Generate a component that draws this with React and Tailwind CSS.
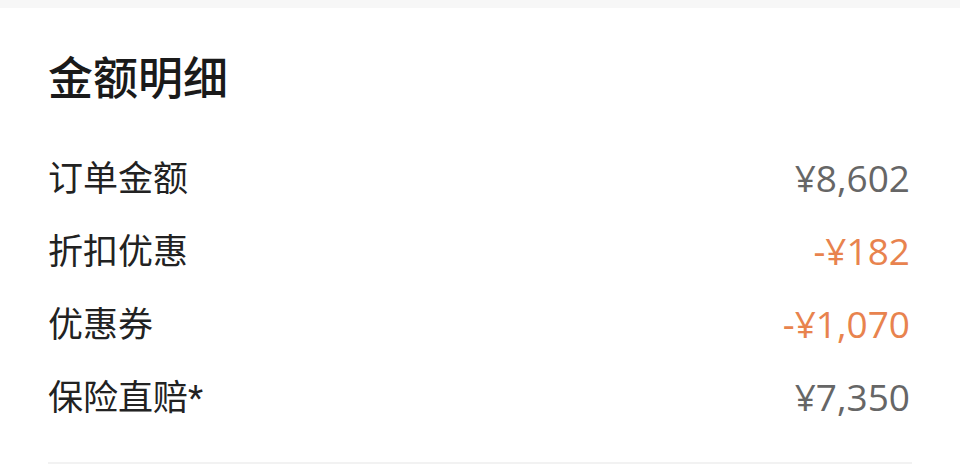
import React from "react";

const rows = [
  { label: "订单金额", value: "¥8,602", accent: false },
  { label: "折扣优惠", value: "-¥182", accent: true },
  { label: "优惠券", value: "-¥1,070", accent: true },
  { label: "保险直赔*", value: "¥7,350", accent: false },
];

export default function App() {
  return (
    <div className="w-[960px] h-[475px] bg-white overflow-hidden font-['Roboto','Noto_Sans_CJK_SC',sans-serif]">
      <div className="h-[8px] bg-[#f7f7f7]" />
      <div className="px-12 pt-[49px]">
        <h2 className="text-[45px] leading-[45px] font-medium text-[#1a1a1a]">金额明细</h2>
        <div className="mt-[40px]">
          {rows.map((r) => (
            <div key={r.label} className="h-[73px] flex items-center justify-between">
              <span className="text-[35px] leading-none pt-[2px] text-[#222222]">{r.label}</span>
              <span
                className={`font-['Open_Sans',sans-serif] text-[37px] leading-none pb-[2px] mr-[2px] ${
                  r.accent ? "text-[#e8834e]" : "text-[#666666]"
                }`}
              >
                {r.value}
              </span>
            </div>
          ))}
        </div>
        <div className="mt-[28px] h-[2px] bg-[#f2f2f2]" />
      </div>
    </div>
  );
}
